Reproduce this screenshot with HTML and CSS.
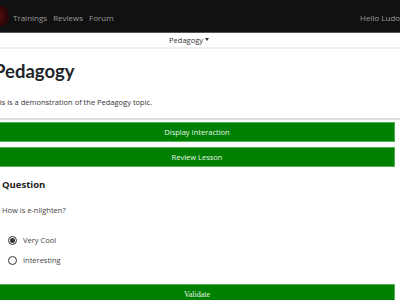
FILE: index.html
```html
<!DOCTYPE html>
<html lang="en">
<head>
    <meta charset="UTF-8">
    <title>Pedagogy</title>
    <link rel="stylesheet" href="styles.css">
</head>
<body>
    <nav class="navbar">
        <div class="logo"></div>
        <a href="#">Trainings</a>
        <a href="#">Reviews</a>
        <a href="#">Forum</a>
        <span class="user">Hello Ludovic</span>
    </nav>

    <div class="subnav">Pedagogy <span class="caret"></span></div>

    <div class="topic">
        <h1>Pedagogy</h1>
        <p>This is a demonstration of the Pedagogy topic.</p>
    </div>

    <hr class="divider">

    <div class="actions">
        <button class="btn">Display Interaction</button>
        <button class="btn">Review Lesson</button>
    </div>

    <div class="question">
        <h2>Question</h2>
        <p>How is e-nlighten?</p>
        <label class="option"><span class="radio checked"></span>Very Cool</label>
        <label class="option"><span class="radio"></span>Interesting</label>
    </div>

    <button class="btn validate">Validate</button>
</body>
</html>
```

FILE: styles.css
```css
* {
    box-sizing: border-box;
    margin: 0;
    padding: 0;
}

body {
    font-family: "Open Sans", "Noto Sans", sans-serif;
    background-color: #fff;
    color: #212529;
    overflow: hidden;
}

.navbar {
    height: 33px;
    background-color: #111;
    border-bottom: 1px solid #555;
    display: flex;
    align-items: center;
    gap: 6px;
    white-space: nowrap;
}

.logo {
    width: 22px;
    height: 22px;
    border-radius: 50%;
    background: radial-gradient(circle at 40% 50%, #6b1010, #2a0606 70%);
    margin-left: -13px;
    margin-right: -2px;
}

.navbar a {
    color: #9a9a9a;
    text-decoration: none;
    font-size: 8px;
    padding-top: 2px;
}

.navbar .user {
    margin-left: auto;
    color: #9a9a9a;
    font-size: 8px;
    padding-top: 2px;
    margin-right: -10px;
}

.subnav {
    height: 16px;
    border-bottom: 2px solid #eee;
    text-align: center;
    font-size: 7.5px;
    color: #333;
    line-height: 14px;
    padding-right: 22px;
}

.caret {
    display: inline-block;
    border-top: 3px solid #333;
    border-left: 2px solid transparent;
    border-right: 2px solid transparent;
    vertical-align: 2px;
}

.topic {
    margin-left: -6px;
    padding-top: 10px;
}

.topic h1 {
    font-family: Lato, "Open Sans", sans-serif;
    font-size: 18.5px;
    font-weight: 700;
    line-height: 24px;
    color: #212529;
}

.topic p {
    font-size: 7.5px;
    color: #333;
    margin-top: 14px;
    margin-left: -3px;
}

.divider {
    border: none;
    border-top: 2px solid #ddd;
    margin-top: 11px;
}

.actions {
    display: flex;
    flex-direction: column;
    gap: 5px;
    margin-top: 2px;
    margin-right: 5px;
}

.btn {
    display: block;
    width: 100%;
    height: 20px;
    background-color: #008000;
    border: 1px solid #4caf50;
    border-left: none;
    color: #e8f5e8;
    font-family: inherit;
    font-size: 7.5px;
}

.question {
    padding: 11px 0 0 2px;
}

.question h2 {
    font-size: 9.5px;
    font-weight: 700;
    color: #222;
}

.question p {
    font-size: 7.5px;
    color: #444;
    margin-top: 14px;
}

.option {
    display: flex;
    align-items: center;
    gap: 6px;
    font-size: 7.5px;
    color: #444;
    margin-left: 6px;
    height: 20px;
}

.question p + .option {
    margin-top: 15px;
}

.radio {
    width: 9px;
    height: 9px;
    border: 1px solid #333;
    border-radius: 50%;
    display: flex;
    align-items: center;
    justify-content: center;
}

.radio.checked::after {
    content: "";
    width: 5px;
    height: 5px;
    border-radius: 50%;
    background-color: #333;
}

.validate {
    width: 395px;
    margin-top: 14px;
    font-family: "Liberation Serif", serif;
    font-size: 8px;
}
```
